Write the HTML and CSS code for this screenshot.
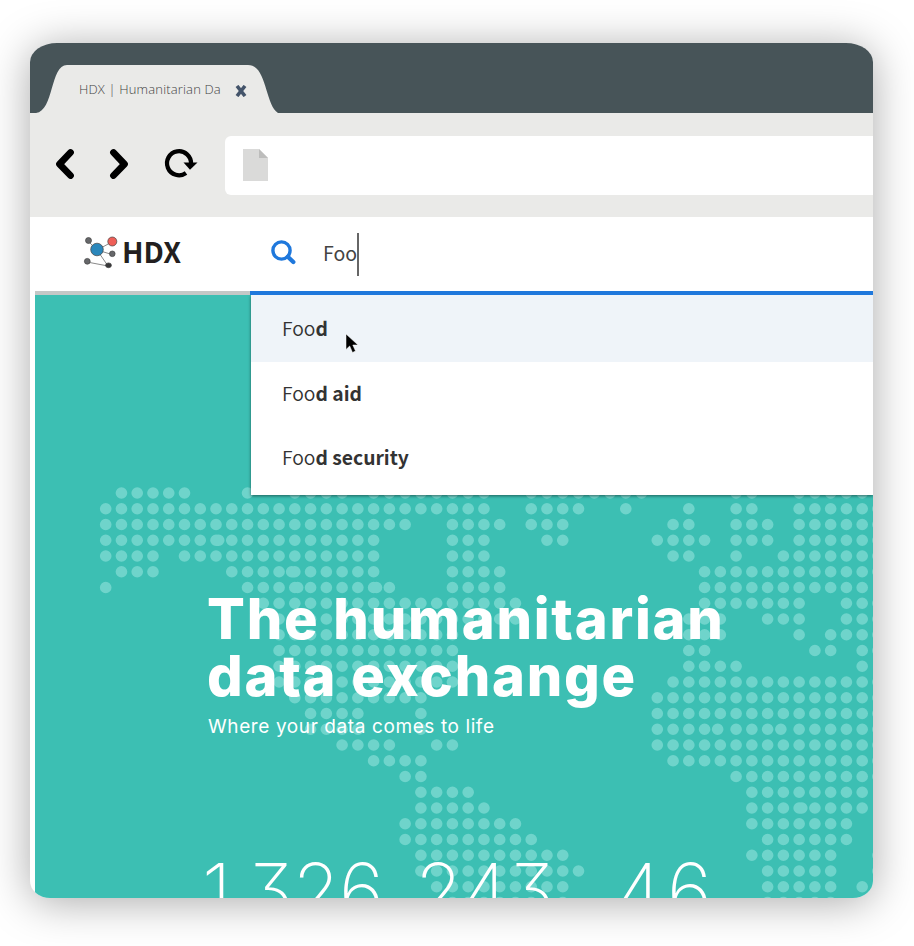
FILE: index.html
```html
<!DOCTYPE html>
<html lang="en">
<head>
<meta charset="utf-8">
<title>HDX | Humanitarian Data Exchange</title>
<link rel="stylesheet" href="styles.css">
</head>
<body>
<main class="window">
  <div class="tabs">
    <div class="tab">
      <svg class="tab-shape" width="242" height="48" viewBox="0 0 242 48"><path d="M0 48C18 46 14 0 31 0H212C231 0 229 40 242 48Z" fill="#eaeae8"/></svg>
      <span class="tab-title">HDX | Humanitarian Da</span>
      <svg class="tab-close" width="12" height="12" viewBox="0 0 12 12"><path d="M2 1L10 11M10 1L2 11" stroke="#44546a" stroke-width="3.600"/></svg>
    </div>
  </div>

  <div class="toolbar">
    <svg class="nav" width="145" height="34" viewBox="0 0 145 34" fill="none" stroke="#000">
      <path d="M16.500 5.500L5.500 17.200L16.500 28.500" stroke-width="6.800" stroke-linecap="round" stroke-linejoin="round"/>
      <path d="M59.500 5.500L70.500 17.200L59.500 28.500" stroke-width="6.800" stroke-linecap="round" stroke-linejoin="round"/>
      <path d="M137 17A12 12 0 1 0 132 26" stroke-width="4.300"/>
      <path d="M129.500 15.500H143.500L136 22.800Z" fill="#000" stroke="none"/>
    </svg>
    <div class="address">
      <svg width="25" height="32" viewBox="0 0 25 32"><path d="M0 0H16L25 9V32H0Z" fill="#dadad9"/><path d="M16 0L25 9H16Z" fill="#bdbdbc"/></svg>
    </div>
  </div>

  <header class="header">
    <div class="brand">
      <svg width="36" height="34" viewBox="0 0 36 34">
        <g stroke="#8a8a8a" stroke-width="1"><path d="M14 15L5 6M14 15L29 7M14 15L29 19.500M14 15L25 31M4 27L25 31"/></g>
        <g stroke="#444" stroke-width=".7">
          <circle cx="14" cy="14.500" r="6.300" fill="#2b87bb"/>
          <circle cx="29.300" cy="6.500" r="4.500" fill="#ef5f58"/>
          <circle cx="5.500" cy="5.500" r="3" fill="#66676a"/>
          <circle cx="29.300" cy="18.800" r="2.800" fill="#66676a"/>
          <circle cx="4.300" cy="26.300" r="2.900" fill="#66676a"/>
          <ellipse cx="25.500" cy="30.300" rx="2.900" ry="2.400" fill="#38383a"/>
        </g>
      </svg>
      <span class="brand-name">HDX</span>
    </div>
    <div class="search">
      <svg width="26" height="26" viewBox="0 0 26 26" fill="none" stroke="#1f78dc"><circle cx="10.500" cy="10.500" r="8.600" stroke-width="3.400"/><path d="M16.800 16.800L22.300 22" stroke-width="4.300" stroke-linecap="round"/></svg>
      <span class="query">Foo</span><span class="caret"></span>
    </div>
  </header>

  <section class="hero">
    <svg class="map" width="838" height="603" viewBox="0 0 838 603">
      <g transform="translate(70.700 198) scale(15.760 15.750)" fill="none" stroke="#6fd4cb" stroke-width=".74" stroke-linecap="round" stroke-dasharray="0 1">
        <path d="M1 0H5.200M9 0h.2M12 0H15.200M17 0H24.200M27 0H34.200M40 0H41.200M44 0H48.200"/>
        <path d="M0 1H24.200M27 1H30.200M33 1h.2M37 1h.2M40 1H41.200M44 1H49.200"/>
        <path d="M0 2H19.200M22 2H25.200M27 2H29.200M36 2H37.200M40 2H42.200M44 2H49.200"/>
        <path d="M0 3H17.200M7.170 3h.1M22 3H24.200M28 3H29.200M35 3H38.200M40 3H42.200M44 3H49.200"/>
        <path d="M0 4H3.200M5 4H17.200M22 4H24.200M36 4H37.200M40 4h.2M43 4H49.200"/>
        <path d="M1 5H3.200M8 5H17.200M11.800 5h.1M22 5H25.200M38 5H49.200"/>
        <path d="M0 6h.2M9 6H18.200M12.180 6h.1M17.180 6h.1M22 6H25.200M38 6H48.200"/>
        <path d="M10 7H26.200M38 7H44.200M47 7H49.200"/>
        <path d="M11 8H26.200M37 8H39.200M42 8H44.200M47 8H49.200"/>
        <path d="M11 9H22.200M37 9H39.200M44 9h.2M46 9H49.200"/>
        <path d="M11 10H22.200M37 10H38.200M45 10H46.200M48 10H49.200"/>
        <path d="M11 11H22.200M37 11H40.200M48 11h.2"/>
        <path d="M11 12H22.200M36 12H49.200"/>
        <path d="M12 13H20.200M35 13H49.200"/>
        <path d="M13 14H16.200M20 14h.2M35 14H49.200"/>
        <path d="M13 15H16.200M20 15h.2M35 15H38.200M38.830 15h.1M40 15H42.200M42.840 15h.1M44 15H49.200"/>
        <path d="M15 16H18.200M21 16H22.200M35 16H49.200"/>
        <path d="M17 17H20.200M36 17H49.200"/>
        <path d="M19 18H20.200M40 18H49.200"/>
        <path d="M20 19H23.200M41 19H48.200"/>
        <path d="M20 20H24.200M41 20H48.200M44.170 20h.1"/>
        <path d="M19 21H26.200M41 21H47.200"/>
        <path d="M19 22H27.200M42 22H47.200"/>
        <path d="M20 23H29.200M41 23H46.200M49 23h.2"/>
        <path d="M20 24H30.200M42 24H46.200M49 24h.2"/>
        <path d="M21 25H29.200M42 25H46.200M48 25h.2"/>
        <path d="M22 26H27.200M29 26h.2M42 26H46.200"/>
      </g>
    </svg>
    <h1>The humanitarian<br>data exchange</h1>
    <p class="tagline">Where your data comes to life</p>
    <div class="stats"><span class="stat s1">1,<span class="rest">326</span></span><span class="stat s2">243</span><span class="stat s3">46</span></div>

    <ul class="suggestions">
      <li class="active">Foo<b>d</b></li>
      <li>Foo<b>d aid</b></li>
      <li>Foo<b>d security</b></li>
    </ul>
    <svg class="pointer" width="14" height="21" viewBox="0 0 14 21"><path d="M1 1V16.500L4.700 13L7.500 19.500L10.500 18L7.800 12H13Z" fill="#000" stroke="#fff" stroke-width=".5"/></svg>
  </section>
</main>
</body>
</html>
```

FILE: styles.css
```css
* { box-sizing: border-box; }
body { margin: 0; background: #fff; height: 946px; overflow: hidden; padding: 43px 0 0 30px; }
svg { display: block; flex: none; }

.window {
  width: 843px; height: 855px; overflow: hidden; background: #fff;
  display: flex; flex-direction: column;
  border-radius: 27px 27px 20px 20px / 19px 19px 17px 17px;
  box-shadow: 0 4px 44px rgba(0, 0, 0, .34);
}

.tabs { height: 70px; background: #475458; padding: 22px 0 0 6px; flex: none; }
.tab { position: relative; width: 242px; height: 48px; display: flex; align-items: center; padding-left: 43px; }
.tab-shape { position: absolute; left: 0; top: 0; }
.tab-title { position: relative; width: 156px; font: 300 13px/18px "Open Sans", "Noto Sans", sans-serif; letter-spacing: .16px; color: #444; white-space: nowrap; }
.tab-close { position: relative; top: 2px; }

.toolbar { height: 104px; background: #eaeae8; flex: none; display: flex; padding: 23px 0 0 24px; }
.nav { margin-top: 11px; }
.address { flex: 1; margin-left: 26px; height: 59px; background: #fff; border-radius: 6px 0 0 6px; padding: 13px 18px; }

.header { height: 78px; flex: none; display: flex; }
.brand { width: 220px; padding: 18px 0 0 53px; display: flex; background: linear-gradient(#c4c8c7, #c4c8c7) 5px 74px / 215px 4px no-repeat; }
.brand-name { font: 700 28.500px/32px "Noto Sans CJK SC", sans-serif; color: #231f20; margin-left: 3px; }
.search { flex: 1; display: flex; border-bottom: 4px solid #1f78dc; padding: 16px 0 0 21px; font: 400 19.500px/40px "Noto Sans CJK SC", sans-serif; color: #444; }
.search svg { margin-top: 7px; }
.query { margin-left: 26px; width: 34px; }
.caret { width: 1.500px; height: 43px; background: #666; }

.hero { position: relative; flex: 1; margin-left: 5px; background: #3cbfb3; color: #fff; font-family: Inter, sans-serif; padding: 296px 0 0 172px; overflow: hidden; }
.map { position: absolute; left: 0; top: 0; }
h1 { position: relative; margin: 0; font-size: 56px; line-height: 57px; font-weight: 800; letter-spacing: 1.750px; white-space: nowrap; }
.tagline { position: relative; margin: 10px 0 0 1px; font-size: 19px; line-height: 24px; font-weight: 400; letter-spacing: .6px; white-space: nowrap; }
.stats { position: relative; display: flex; margin: 111px 0 0 -5px; font-size: 77px; line-height: 82px; font-weight: 200; font-feature-settings: "cv09"; white-space: nowrap; }
.s1 { width: 213px; }
.rest { margin-left: -5px; letter-spacing: -1px; }
.s2 { width: 200px; }
.s3 { letter-spacing: 5px; }

.suggestions { position: absolute; left: 216px; top: 0; right: 0; height: 200px; margin: 0; padding: 0; list-style: none; background: #fff; box-shadow: 0 1px 3px rgba(0, 0, 0, .5); clip-path: inset(0 0 -5px -5px); color: #333; }
.suggestions li { height: 64.400px; padding-left: 31px; font: 350 19.300px/63px "Noto Sans CJK SC", sans-serif; }
.suggestions b { font-weight: 700; }
.suggestions .active { height: 67px; line-height: 67px; background: #eff4f9; }
.pointer { position: absolute; left: 310px; top: 38px; }
```
